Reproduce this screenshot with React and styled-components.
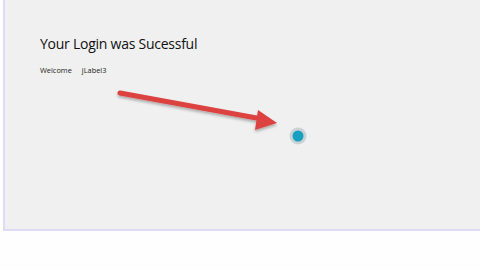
import React from "react";
import styled, { createGlobalStyle } from "styled-components";

const Global = createGlobalStyle`
  html, body {
    margin: 0;
    padding: 0;
    background: #ffffff;
    width: 480px;
    height: 270px;
    overflow: hidden;
  }
`;

const Page = styled.div`
  width: 480px;
  height: 270px;
  background: #fefefe;
  padding-left: 3px;
  box-sizing: border-box;
`;

const Frame = styled.div`
  position: relative;
  height: 231px;
  background: #f0f0f0;
  border-left: 2px solid #dedcf2;
  border-bottom: 2px solid #dedcf2;
  box-sizing: border-box;
  padding: 34px 0 0 35px;
`;

const Title = styled.h1`
  margin: 0;
  font-family: "Open Sans", "Noto Sans", sans-serif;
  font-weight: 400;
  font-size: 14px;
  letter-spacing: -0.25px;
  line-height: 20px;
  color: #111;
`;

const Row = styled.div`
  display: flex;
  gap: 10px;
  margin-top: 10px;
  font-family: "Open Sans", "Noto Sans", sans-serif;
  font-size: 7.4px;
  line-height: 12px;
  color: #222;
`;

const Overlay = styled.svg`
  position: absolute;
  left: -5px;
  top: 0;
  pointer-events: none;
`;

export default function App() {
  return (
    <>
      <Global />
      <Page>
        <Frame>
          <Title>Your Login was Sucessful</Title>
          <Row>
            <span>Welcome</span>
            <span>jLabel3</span>
          </Row>
          <Overlay width="480" height="231" viewBox="0 0 480 231">
            <defs>
              <filter id="sh" x="-20%" y="-50%" width="140%" height="200%">
                <feGaussianBlur in="SourceAlpha" stdDeviation="1.5" />
                <feOffset dx="0" dy="1.5" result="b" />
                <feComponentTransfer>
                  <feFuncA type="linear" slope="0.3" />
                </feComponentTransfer>
                <feMerge>
                  <feMergeNode />
                  <feMergeNode in="SourceGraphic" />
                </feMerge>
              </filter>
            </defs>
            <g filter="url(#sh)">
              <line x1="120" y1="93" x2="262" y2="119" stroke="#dc4240" strokeWidth="5" strokeLinecap="round" />
              <polygon points="277,123 258,110 255,130" fill="#dc4240" />
            </g>
            <circle cx="298" cy="136" r="8.5" fill="#c9d2d4" />
            <circle cx="298" cy="136" r="5.5" fill="#169fc0" />
          </Overlay>
        </Frame>
      </Page>
    </>
  );
}
